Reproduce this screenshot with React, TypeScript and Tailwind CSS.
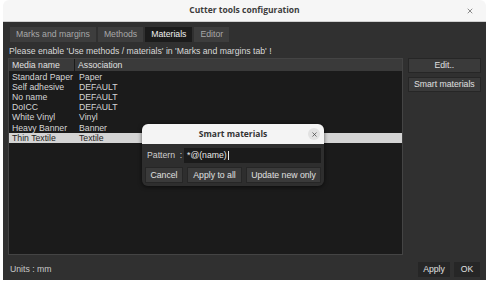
import { X } from 'lucide-react'

const rows = [
  ['Standard Paper', 'Paper'],
  ['Self adhesive', 'DEFAULT'],
  ['No name', 'DEFAULT'],
  ['DoICC', 'DEFAULT'],
  ['White Vinyl', 'Vinyl'],
  ['Heavy Banner', 'Banner'],
  ['Thin Textile', 'Textile'],
]

const tabs = ['Marks and margins', 'Methods', 'Materials', 'Editor']

export default function App() {
  return (
    <div
      className="relative w-[489px] h-[282px] bg-white pl-[3px] pr-[3px] pb-[2px] text-[8.7px] leading-none whitespace-nowrap text-[#d6d6d6]"
      style={{ fontFamily: '"Liberation Sans", Arial, sans-serif' }}
    >
      <div className="flex flex-col h-full">
        {/* title bar */}
        <div className="relative h-[22px] flex items-center justify-center bg-[#f6f6f6] rounded-t-[6px] border-b border-[#d0d0d0]">
          <span
            className="text-[8.5px] font-bold text-[#3c3c3c]"
            style={{ fontFamily: '"Open Sans", "DejaVu Sans", sans-serif' }}
          >
            Cutter tools configuration
          </span>
          <X className="absolute right-[12px] top-[7px] w-[8px] h-[8px] text-[#555]" strokeWidth={2} />
        </div>

        {/* window body */}
        <div className="flex-1 flex flex-col bg-[#303030] px-[5px] pt-[5px] pb-[2px]">
          <div className="flex gap-[2px] pl-[2px]">
            {tabs.map((t) => (
              <div
                key={t}
                className={
                  t === 'Materials'
                    ? 'h-[15px] px-[6px] flex items-center bg-[#1b1b1b] text-[#f0f0f0]'
                    : 'h-[15px] px-[6px] flex items-center bg-[#3d3d3d] text-[#a8a8a8]'
                }
              >
                {t}
              </div>
            ))}
          </div>

          <div className="mt-[3px] h-[12px] flex items-center pl-[1px] text-[#d8d8d8]">
            Please enable 'Use methods / materials' in 'Marks and margins tab' !
          </div>

          <div className="flex gap-[5px] mt-[1px]">
            <div className="w-[398px] h-[197px] bg-[#1b1b1b] border border-[#444] flex flex-col">
              <div className="flex h-[12px] bg-[#3a3a3a] text-[#e0e0e0]">
                <div className="w-[66px] pl-[3px] flex items-center border-r border-[#1b1b1b]">Media name</div>
                <div className="pl-[3px] flex items-center">Association</div>
              </div>
              <div className="pt-[1px]">
                {rows.map(([a, b]) => (
                  <div
                    key={a}
                    className={
                      a === 'Thin Textile'
                        ? 'flex h-[10.2px] items-center bg-[#d4d4d4] text-[#222]'
                        : 'flex h-[10.2px] items-center'
                    }
                  >
                    <div className="w-[66px] pl-[3px]">{a}</div>
                    <div className="pl-[4px]">{b}</div>
                  </div>
                ))}
              </div>
            </div>

            <div className="flex flex-col gap-[4px] w-[74px]">
              <div className="h-[15px] flex items-center justify-center bg-[#3a3a3a] border border-[#262626] text-[#e0e0e0]">
                Edit..
              </div>
              <div className="h-[15px] flex items-center justify-center bg-[#3a3a3a] border border-[#262626] text-[#e0e0e0]">
                Smart materials
              </div>
            </div>
          </div>

          <div className="flex items-center mt-[7px]">
            <span className="pl-[2px] text-[#c8c8c8]">Units : mm</span>
            <div className="ml-auto flex gap-[4px] mr-[1px]">
              <div className="h-[15px] w-[32px] flex items-center justify-center bg-[#262626] text-[#e0e0e0]">Apply</div>
              <div className="h-[15px] w-[26px] flex items-center justify-center bg-[#262626] text-[#e0e0e0]">OK</div>
            </div>
          </div>
        </div>
      </div>

      {/* modal dialog */}
      <div className="absolute left-[142px] top-[124px] w-[182px] rounded-[6px] overflow-hidden shadow-[0_1px_4px_rgba(0,0,0,0.6)]">
        <div className="relative h-[20px] flex items-center justify-center bg-[#f4f4f4]">
          <span
            className="font-bold text-[8.5px] text-[#333]"
            style={{ fontFamily: '"Open Sans", "DejaVu Sans", sans-serif' }}
          >
            Smart materials
          </span>
          <div className="absolute right-[4px] top-[4px] w-[12px] h-[12px] rounded-full bg-[#e2e2e2] flex items-center justify-center">
            <X className="w-[7px] h-[7px] text-[#444]" strokeWidth={2.5} />
          </div>
        </div>
        <div className="bg-[#2e2e2e] px-[3px] pt-[4px] pb-[3px] flex flex-col gap-[4px]">
          <div className="flex items-center h-[15px]">
            <span className="w-[39px] pl-[2px] text-[#cfcfcf]">Pattern&nbsp;&nbsp;:</span>
            <div className="flex-1 h-[15px] bg-[#1b1b1b] flex items-center pl-[3px] text-[#e8e8e8]">
              *@(name)
              <span className="ml-[1px] w-[1px] h-[9px] bg-[#e8e8e8]" />
            </div>
          </div>
          <div className="flex gap-[4px] h-[16px]">
            <div className="w-[38px] flex items-center justify-center bg-[#3a3a3a] border border-[#262626] text-[#e0e0e0]">Cancel</div>
            <div className="w-[55px] flex items-center justify-center bg-[#3a3a3a] border border-[#262626] text-[#e0e0e0]">Apply to all</div>
            <div className="flex-1 flex items-center justify-center bg-[#3a3a3a] border border-[#262626] text-[#e0e0e0]">Update new only</div>
          </div>
        </div>
      </div>
    </div>
  )
}
